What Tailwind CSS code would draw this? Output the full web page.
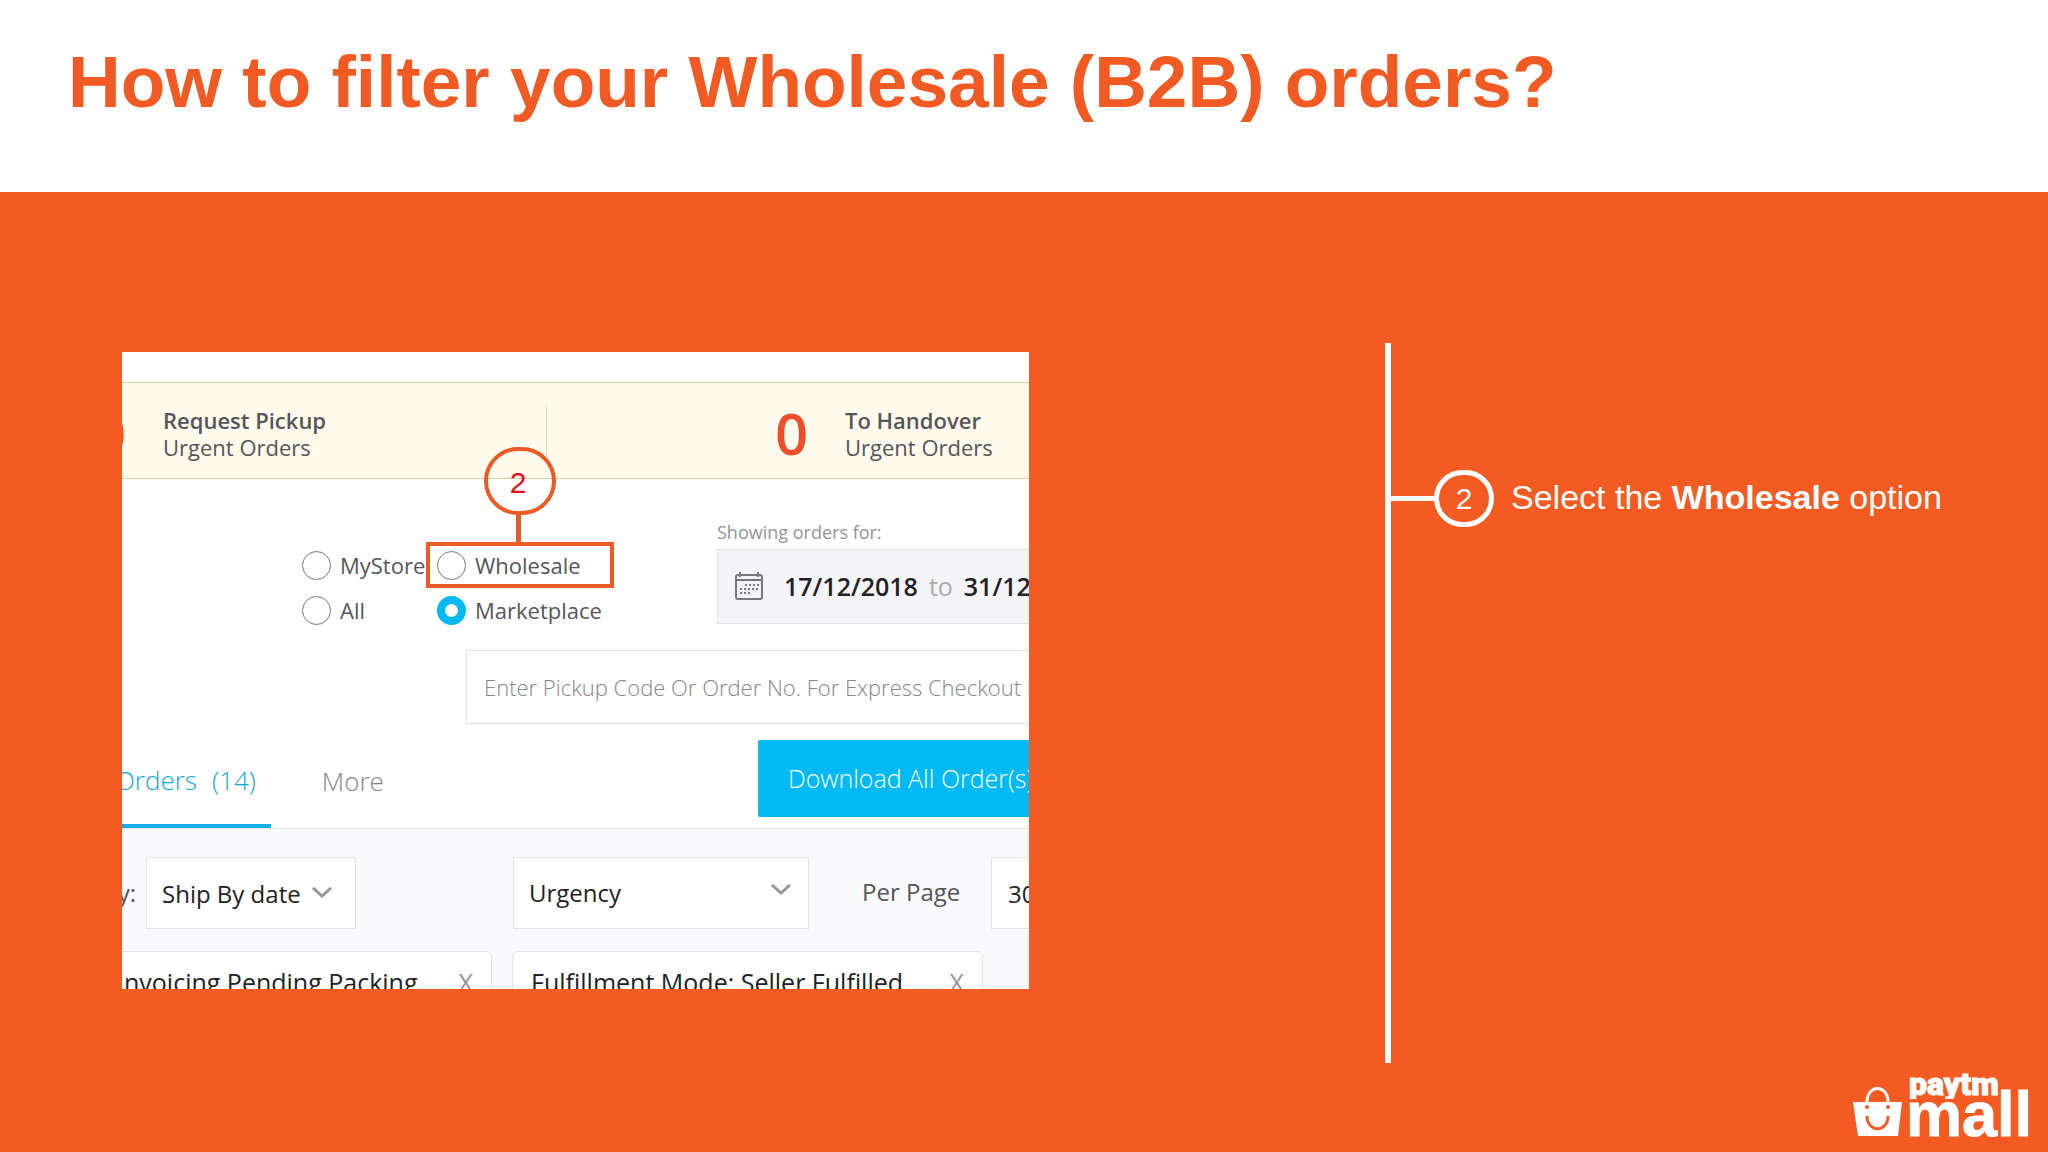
<!DOCTYPE html>
<html lang="en">
<head>
  <meta charset="UTF-8">
  <meta name="viewport" content="width=device-width, initial-scale=1.0">
  <title>How to filter your Wholesale (B2B) orders?</title>
  <script src="https://cdn.jsdelivr.net/npm/@tailwindcss/browser@4"></script>
</head>
<body class="min-h-screen flex flex-col bg-[#f45b22] font-['Liberation_Sans',sans-serif]">
  <header class="h-[192px] bg-white px-[68px] pt-[42px]">
    <h1 class="text-[73px] leading-20 font-bold text-[#f15a22]">How to filter your Wholesale (B2B) orders?</h1>
  </header>

  <main class="grow grid grid-cols-[907fr_663fr] gap-x-[356px] items-start pl-[122px] pt-[151px]">
    <!-- Orders panel -->
    <section class="relative h-[637px] mt-[9px] pt-[30px] overflow-hidden bg-white font-['Open_Sans',sans-serif] text-[22px] leading-7 text-[#56565a]">
      <div class="flex h-[97px] border-y border-[#d9cf9f] bg-[#fffaeb]">
        <div class="w-[425px] shrink-0 flex items-center pt-1">
          <span class="-ml-[29px] w-[70px] shrink-0 text-[58px] font-semibold text-[#f04e2a]">0</span>
          <p class="pt-[2px] leading-[27px] grow"><b class="font-semibold">Request Pickup</b><br>Urgent Orders</p>
          <span class="h-14 w-px bg-[#dcd8c4]"></span>
        </div>
        <div class="grow flex items-center pt-1 pl-[228px]">
          <span class="w-[70px] shrink-0 text-[58px] font-semibold text-[#f04e2a]">0</span>
          <p class="pt-[2px] leading-[27px] whitespace-nowrap"><b class="font-semibold">To Handover</b><br>Urgent Orders</p>
        </div>
      </div>

      <div class="flex h-[146px]">
        <fieldset class="ml-[180px] mt-[71px] w-[415px] shrink-0 grid grid-cols-[135px_1fr] auto-rows-[45px] items-start">
          <label class="flex items-center gap-[9px] h-[30px]"><input type="radio" name="channel" class="appearance-none size-[29px] shrink-0 rounded-full border border-[#77777c]">MyStore</label>
          <label class="flex items-center gap-[9px] h-[30px]"><input type="radio" name="channel" class="appearance-none size-[29px] shrink-0 rounded-full border border-[#77777c]">Wholesale</label>
          <label class="flex items-center gap-[9px] h-[30px]"><input type="radio" name="channel" class="appearance-none size-[29px] shrink-0 rounded-full border border-[#77777c]">All</label>
          <label class="flex items-center gap-[9px] h-[30px]"><input type="radio" name="channel" checked class="appearance-none size-[29px] shrink-0 rounded-full border-8 border-[#00b9f5]">Marketplace</label>
        </fieldset>
        <div class="w-[500px] shrink-0 mt-[39px]">
          <p class="text-[18px] leading-7 text-[#939398]">Showing orders for:</p>
          <button type="button" class="flex items-center h-[75px] w-full mt-[3px] pl-4 pb-[2px] border border-[#e4e4e8] bg-[#f4f4f6] text-[25px] text-[#222226] font-semibold whitespace-nowrap">
            <svg class="size-[30px] mr-5" viewBox="0 0 30 30" fill="none" stroke="#77777c">
              <rect x="2" y="4" width="26" height="24" rx="2" stroke-width="2"/>
              <path d="M2 9h26" stroke-width="2"/>
              <path d="M6 1v5M24 1v5" stroke-width="2"/>
              <path d="M11 14h15M6 18h20M6 22h12" stroke-width="2" stroke-dasharray="2 2"/>
            </svg>
            17/12/2018<span class="mx-[11px] font-normal text-[#a9a9ae]">to</span>31/12/2018
          </button>
        </div>
      </div>

      <input type="text" aria-label="Pickup code or order number" placeholder="Enter Pickup Code Or Order No. For Express Checkout" class="block ml-[344px] mt-[25px] w-[700px] h-[74px] px-[17px] border border-[#e4e4e8] font-light placeholder:text-[#85858a]">

      <div class="flex items-start h-[105px] border-b border-[#e4e4e8]">
        <nav class="flex items-start h-[105px] text-[26px] leading-8">
          <button type="button" class="-ml-[7px] h-[104px] pt-3 pr-[15px] flex items-center gap-[15px] border-b-4 border-[#12b0e8] font-light text-[#12a8de]"><span>Orders</span><span>(14)</span></button>
          <button type="button" class="ml-[51px] mt-[41px] font-light text-[#85858a]">More</button>
        </nav>
        <button type="button" class="absolute left-[636px] top-[388px] h-[77px] w-[330px] rounded-xs bg-[#00b9f5] pl-[30px] pb-[2px] text-left text-[25px] font-light text-white">Download All Order(s)</button>
      </div>

      <div class="bg-[#f9f8fb] pt-7 h-[200px] text-[24px] text-[#222226]">
        <div class="flex items-center w-[1200px]">
          <label for="sort" class="-ml-[27px] w-[51px] pr-[10px] text-right text-[#56565a]">By:</label>
          <div class="relative">
            <select id="sort" class="block appearance-none w-[210px] h-[72px] pl-[15px] pt-[2px] border border-[#e4e4e8] bg-white leading-9"><option>Ship By date</option></select>
            <svg class="absolute right-6 top-[30px] w-5 h-3 pointer-events-none" viewBox="0 0 20 12" fill="none" stroke="#97979b" stroke-width="3"><path d="M1 1l9 8 9-8"/></svg>
          </div>
          <div class="relative ml-[157px]">
            <select aria-label="Urgency" class="block appearance-none w-[296px] h-[72px] pl-[15px] border border-[#e4e4e8] bg-white leading-9"><option>Urgency</option></select>
            <svg class="absolute right-[18px] top-[27px] w-5 h-3 pointer-events-none" viewBox="0 0 20 12" fill="none" stroke="#97979b" stroke-width="3"><path d="M1 1l9 8 9-8"/></svg>
          </div>
          <label for="perPage" class="ml-[53px] w-[129px] pb-[2px] text-[#56565a]">Per Page</label>
          <select id="perPage" class="appearance-none w-[120px] h-[72px] pl-4 pt-[2px] border border-[#e4e4e8] bg-white leading-9"><option>30</option></select>
        </div>
        <div class="flex mt-[22px] w-[1200px] text-[25px]">
          <div class="-ml-[41px] w-[411px] h-[66px] pl-[35px] pr-[18px] pb-1 flex items-center justify-between border border-[#e4e4e8] rounded-md bg-white">Invoicing Pending Packing<button type="button" class="text-[#939398]">X</button></div>
          <div class="ml-[20px] w-[471px] h-[66px] px-[18px] pb-1 flex items-center justify-between border border-[#e4e4e8] rounded-md bg-white">Fulfillment Mode: Seller Fulfilled<button type="button" class="text-[#939398]">X</button></div>
        </div>
      </div>

      <!-- Callout over the Wholesale radio -->
      <div class="absolute left-[362px] top-[95px] w-[72px] h-[68px] pr-1 pt-1 rounded-full border-4 border-[#ea5b25] flex items-center justify-center font-['Liberation_Sans',sans-serif] text-[30px] text-[#e8101c]">2</div>
      <div class="absolute left-[394px] top-[162px] w-[5px] h-[30px] bg-[#ea5b25]"></div>
      <div class="absolute left-[304px] top-[190px] w-[188px] h-[46px] border-4 border-[#ea5b25]"></div>
    </section>

    <!-- Steps -->
    <ol class="h-[720px] pt-[127px] border-l-[6px] border-white text-white">
      <li class="flex items-center">
        <span class="w-[43px] h-[5px] bg-white"></span>
        <span class="w-[60px] h-[57px] rounded-full border-[5px] border-white flex items-center justify-center text-[30px]">2</span>
        <p class="ml-[17px] pb-[2px] text-[34px]">Select the <b>Wholesale</b> option</p>
      </li>
    </ol>
  </main>

  <svg class="absolute right-4 bottom-3 w-[180px] h-[68px]" viewBox="0 0 180 68" fill="#fff" role="img" aria-label="Paytm Mall">
    <clipPath id="wordmarkTop"><path d="M50 0h130v27H50z"/></clipPath>
    <path d="M1 30h49l-4 34H6z"/>
    <path d="M15 30c0-18 21-18 21 0" fill="none" stroke="#fff" stroke-width="3"/>
    <path d="M15 44c0 17 21 17 21 0" fill="none" stroke="#f45b22" stroke-width="3"/>
    <circle cx="15" cy="35" r="2" fill="#f45b22"/><circle cx="36" cy="35" r="2" fill="#f45b22"/>
    <text x="57" y="23" font-family="Roboto, sans-serif" font-weight="900" font-size="32" stroke="#fff" clip-path="url(#wordmarkTop)">paytm</text>
    <text x="54" y="64" font-family="Liberation Sans" font-weight="700" font-size="63" stroke="#fff">mall</text>
  </svg>
</body>
</html>
